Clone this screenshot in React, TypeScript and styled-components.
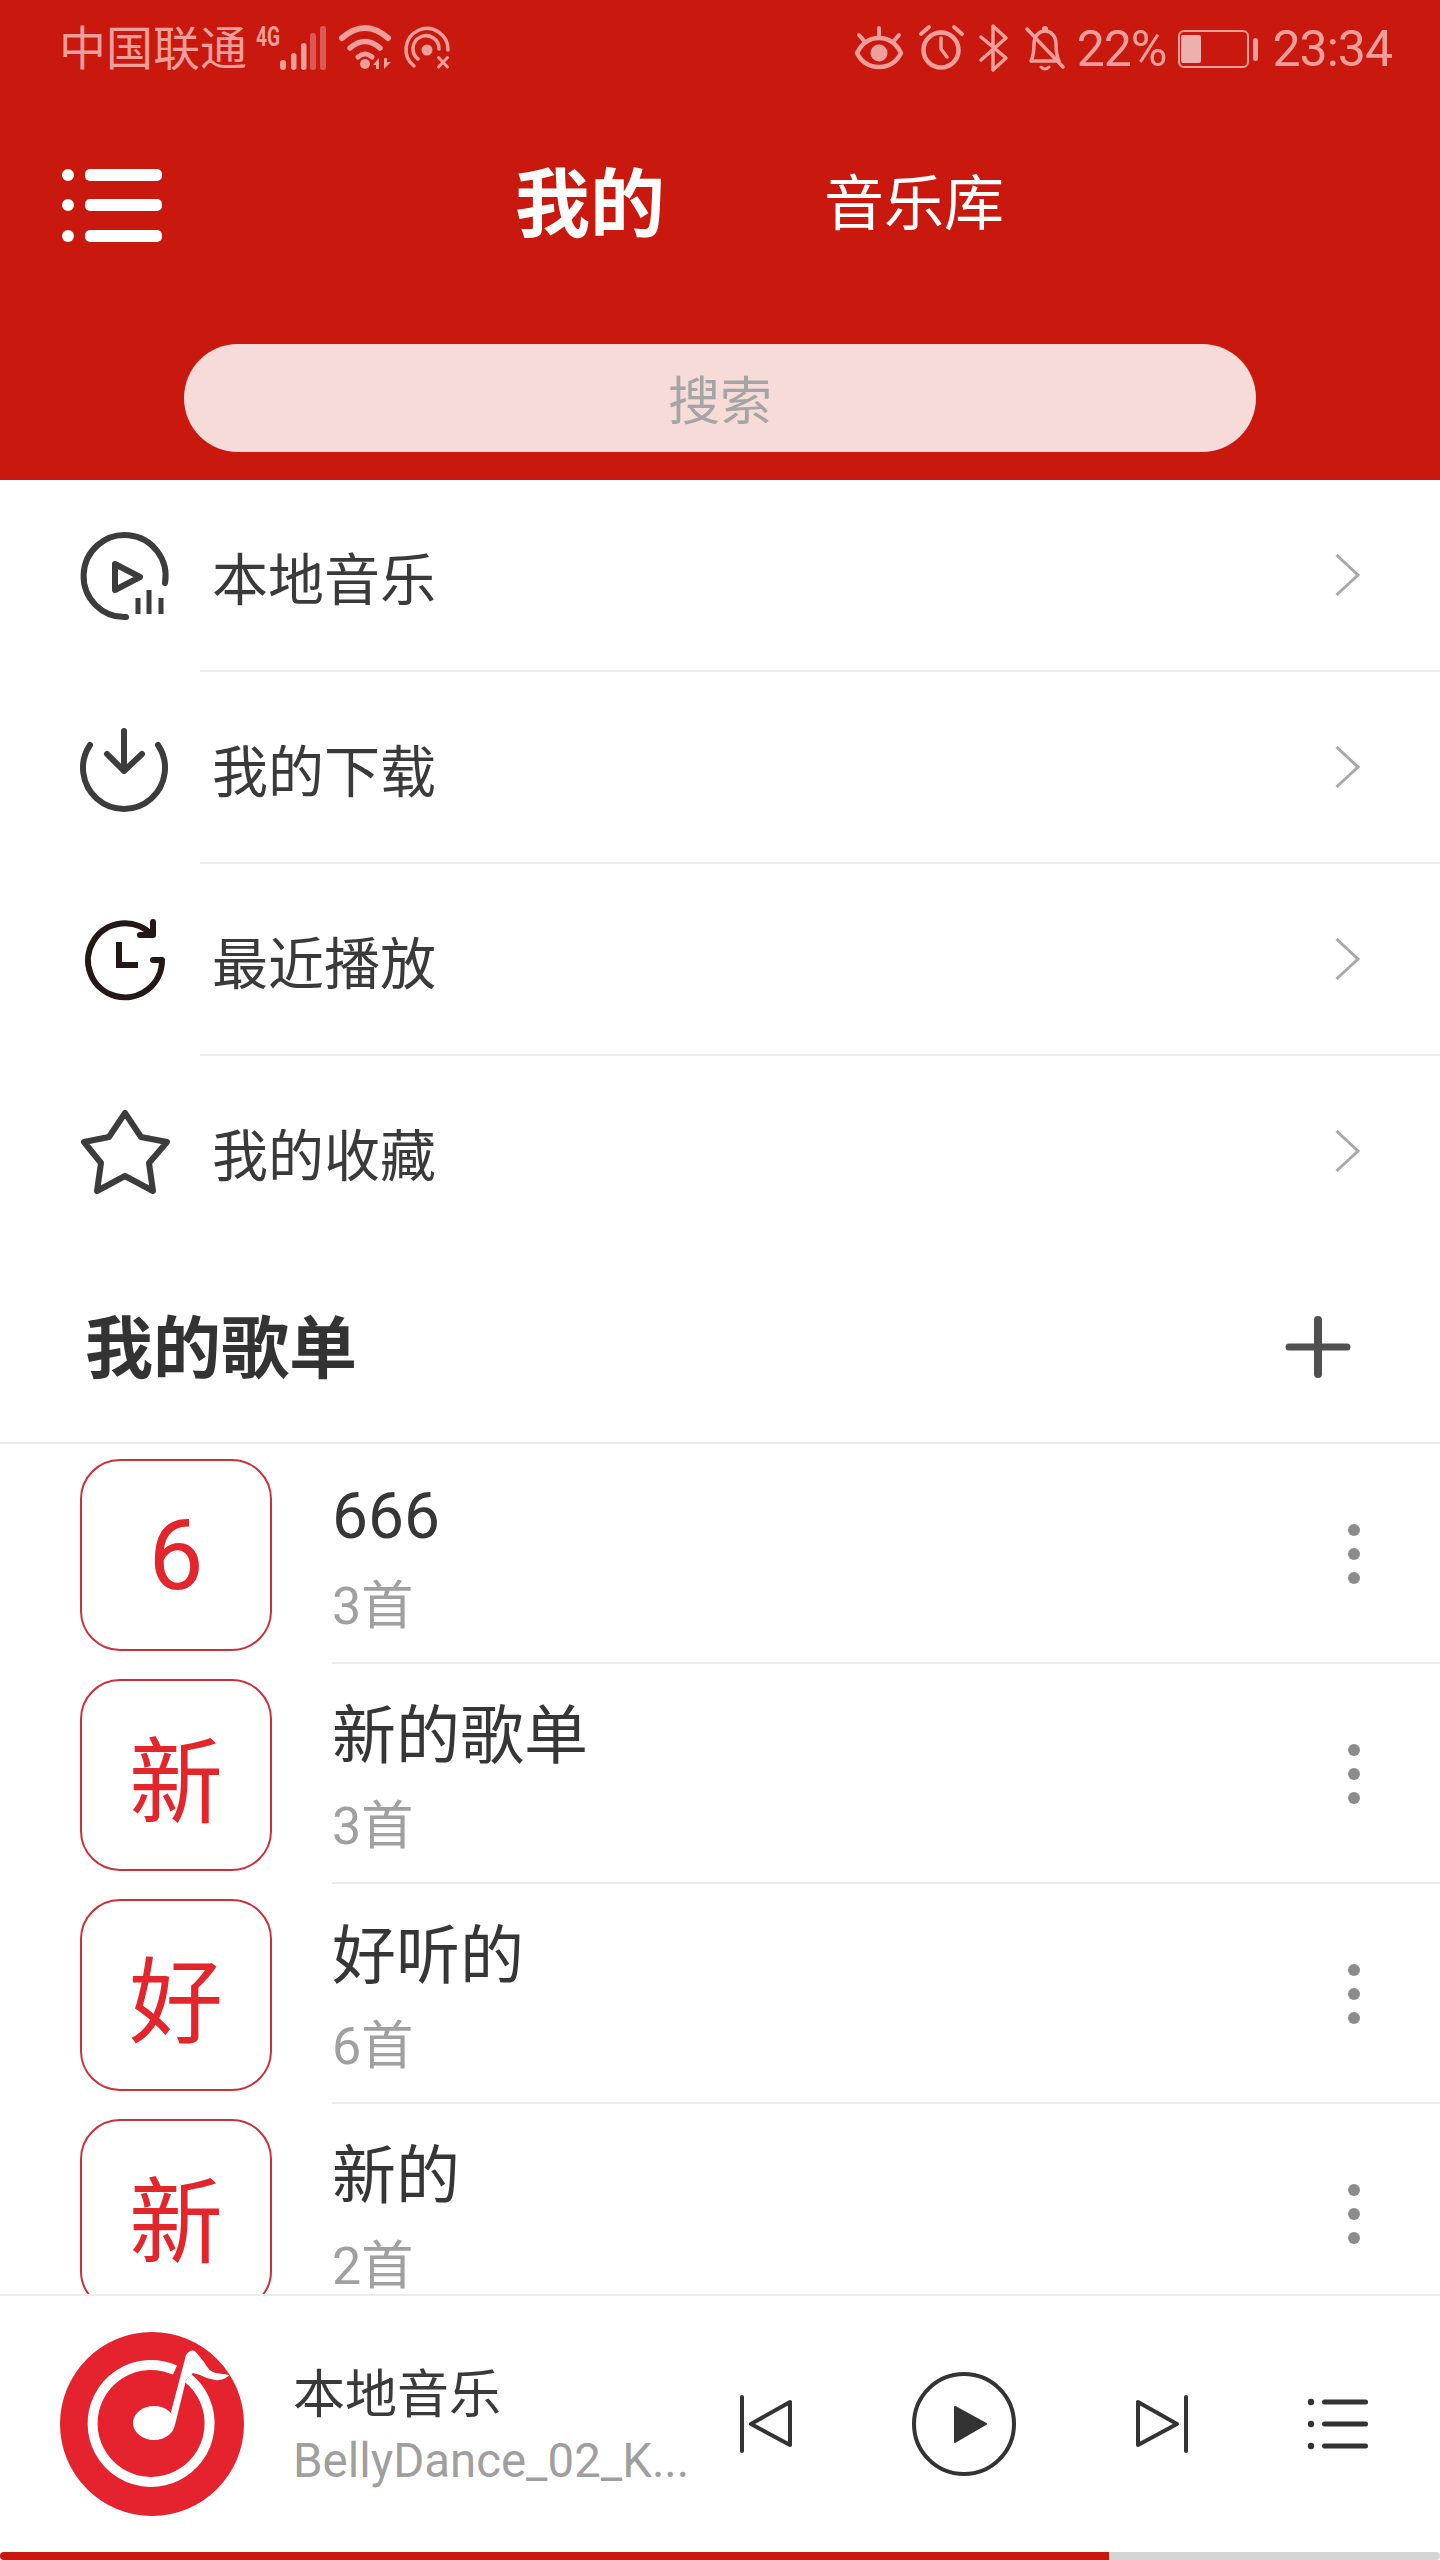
import React from "react";
import styled, { createGlobalStyle } from "styled-components";

const RED = "#c9190f";
const FONT = `Roboto, "Noto Sans CJK SC", sans-serif`;
const STATUS = "#ef9f9b";

const Global = createGlobalStyle`
  html, body { margin: 0; padding: 0; background: #fff; }
  * { box-sizing: border-box; }
`;

const Page = styled.div`
  width: 1440px;
  height: 2560px;
  display: flex;
  flex-direction: column;
  overflow: hidden;
  background: #fff;
  font-family: ${FONT};
`;

const Header = styled.header`
  height: 480px;
  flex: none;
  background: ${RED};
  display: flex;
  flex-direction: column;
`;

const StatusBar = styled.div`
  height: 98px;
  padding: 0 48px 0 59px;
  display: flex;
  align-items: center;
  justify-content: space-between;
  color: ${STATUS};
`;

const StatusGroup = styled.div`
  display: flex;
  align-items: center;
`;

const Carrier = styled.span`
  font-size: 47px;
  line-height: 60px;
  width: 197px;
`;

const Percent = styled.span`
  font-size: 50px;
  line-height: 60px;
  letter-spacing: -1px;
  margin: 0 12px 0 12px;
`;

const Clock = styled.span`
  font-size: 50px;
  line-height: 60px;
  letter-spacing: -1px;
  margin-left: 14px;
`;

const Nav = styled.nav`
  height: 204px;
  padding: 10px 0 0 62px;
  display: flex;
  align-items: center;
`;

const Tabs = styled.div`
  margin-left: 353px;
  display: flex;
  align-items: center;
  gap: 159px;
  color: #fff;
`;

const Tab = styled.span<{ $active?: boolean }>`
  font-size: ${(p) => (p.$active ? 75 : 60)}px;
  font-weight: ${(p) => (p.$active ? 700 : 400)};
  line-height: 90px;
`;

const Search = styled.div`
  margin: 42px 0 28px 184px;
  width: 1072px;
  height: 108px;
  border-radius: 54px;
  padding-top: 11px;
  background: #f7dbd9;
  color: #a5a5a5;
  font-size: 52px;
  line-height: 96px;
  display: flex;
  align-items: flex-start;
  justify-content: center;
`;

const Row = styled.div`
  height: 192px;
  display: flex;
`;

const RowIcon = styled.div`
  width: 200px;
  padding-left: 82px;
  display: flex;
  align-items: center;
  flex: none;
`;

const RowBody = styled.div<{ $last?: boolean }>`
  flex: 1;
  display: flex;
  align-items: center;
  justify-content: space-between;
  padding: 0 80px 0 12px;
  border-bottom: 2px solid ${(p) => (p.$last ? "transparent" : "#ececec")};
`;

const RowLabel = styled.span`
  font-size: 56px;
  color: #3a3a3a;
`;

const SectionHead = styled.div`
  height: 196px;
  flex: none;
  padding: 4px 91px 0 85px;
  display: flex;
  align-items: center;
  justify-content: space-between;
  border-bottom: 2px solid #ececec;
`;

const SectionTitle = styled.h2`
  margin: 0 0 8px;
  font-size: 68px;
  font-weight: 700;
  color: #333;
`;

const ListArea = styled.div`
  flex: 1;
  min-height: 0;
  overflow: hidden;
  padding-top: 14px;
`;

const Item = styled.div`
  height: 220px;
  padding-left: 80px;
  display: flex;
  align-items: flex-start;
`;

const Cover = styled.div<{ $digit?: boolean }>`
  width: 192px;
  height: 192px;
  margin-top: 1px;
  flex: none;
  border: 2px solid #c8323a;
  border-radius: 40px;
  color: #e3262b;
  font-size: ${(p) => (p.$digit ? 98 : 94)}px;
  display: flex;
  align-items: center;
  justify-content: center;
`;

const ItemBody = styled.div`
  flex: 1;
  height: 206px;
  margin-left: 60px;
  padding: 0 80px 6px 0;
  border-bottom: 2px solid #ececec;
  display: flex;
  align-items: center;
  justify-content: space-between;
`;

const ItemText = styled.div`
  display: flex;
  flex-direction: column;
`;

const ItemTitle = styled.span`
  font-size: 64px;
  line-height: 100px;
  color: #363636;
`;

const ItemCount = styled.span`
  font-size: 52px;
  line-height: 56px;
  margin: 12px 0;
  color: #a0a0a0;
`;

const Dots = styled.div`
  display: flex;
  flex-direction: column;
  gap: 12px;
  margin-bottom: 6px;
`;

const Dot = styled.span`
  width: 12px;
  height: 12px;
  border-radius: 50%;
  background: #8c8c8c;
`;

const Player = styled.footer`
  height: 258px;
  flex: none;
  border-top: 2px solid #ececec;
  padding: 0 70px 0 60px;
  display: flex;
  align-items: center;
  background: #fff;
`;

const PlayerInfo = styled.div`
  margin-left: 49px;
  padding-top: 10px;
  width: 400px;
  display: flex;
  flex-direction: column;
`;

const PlayerName = styled.span`
  font-size: 52px;
  line-height: 64px;
  color: #3a3a3a;
`;

const PlayerTrack = styled.span`
  font-size: 47.4px;
  line-height: 66px;
  color: #9f9f9f;
  white-space: nowrap;
`;

const Controls = styled.div`
  margin-left: auto;
  display: flex;
  align-items: center;
  gap: 118px;
`;

const Progress = styled.div`
  height: 8px;
  flex: none;
  background: #d5d5d5;
  border-radius: 4px;
  overflow: hidden;
`;

const ProgressFill = styled.div`
  width: 1109px;
  height: 100%;
  background: ${RED};
`;

const Icon = styled.svg`
  display: block;
  flex: none;
  overflow: visible;
`;

const LeftStatusIcons = () => (
  <Icon width={194} height={50} viewBox="256 24 194 50" fill="none">
    <text x="256" y="46" fontFamily="Roboto" fontWeight="700" fontSize="28" fill={STATUS} textLength="24" lengthAdjust="spacingAndGlyphs">4G</text>
    <g fill={STATUS}>
      <rect x="280" y="60" width="6" height="10" rx="3" />
      <rect x="291" y="53" width="5.5" height="17" rx="2.7" />
      <rect x="301" y="43" width="5.5" height="27" rx="2.7" />
    </g>
    <g fill="#dd5a54">
      <rect x="310" y="33" width="6" height="37" rx="3" />
      <rect x="320" y="26" width="6" height="44" rx="3" />
    </g>
    <g stroke={STATUS} strokeLinecap="round">
      <path d="M342 38 Q365 18 388 38" strokeWidth="6" />
      <path d="M350 48 Q365 35 380 48" strokeWidth="5.5" />
      <path d="M358 57 Q365 51 372 57" strokeWidth="5" />
    </g>
    <g fill={STATUS}>
      <circle cx="365" cy="64" r="5" />
      <path d="M379 58 V69 H376 V65 H373 Z" />
      <path d="M384 58 V69 L391 62 H387 V58 Z" />
    </g>
    <g stroke={STATUS} strokeWidth="3.5" strokeLinecap="round">
      <path d="M414 66 A21 21 0 1 1 448 50" />
      <path d="M418 59 A13 13 0 1 1 439 49" />
      <path d="M438.5 57.5 L447.5 67 M447.5 57.5 L438.5 67" strokeWidth="3" />
    </g>
    <circle cx="427" cy="50" r="5.5" fill={STATUS} />
  </Icon>
);

const RightStatusIcons = () => (
  <Icon width={210} height={50} viewBox="855 24 210 50" fill="none" stroke={STATUS} strokeLinecap="round" strokeLinejoin="round">
    <path d="M857 53 C862 43 870 38 879 38 C888 38 896 43 901 53 C896 63 888 67 879 67 C870 67 862 63 857 53Z" strokeWidth="4.5" />
    <circle cx="879" cy="53" r="8.5" fill={STATUS} stroke="none" />
    <path d="M879 28 V37 M859 35 L865 42 M899 35 L893 42" strokeWidth="4" />
    <circle cx="941" cy="50" r="17.5" strokeWidth="4.5" />
    <path d="M941 38 V49 L947 57" strokeWidth="3.5" />
    <path d="M921 34 L929 27 M954 27 L962 34" strokeWidth="4" />
    <path d="M981 37 L1006 58 L993 70 V26 L1006 38 L981 60" strokeWidth="3.5" />
    <path d="M1031 61 C1034 55 1034 50 1034 44 C1034 36 1039 31 1045 31 C1051 31 1056 36 1056 44 C1056 50 1056 55 1059 61 Z" strokeWidth="3.5" />
    <circle cx="1045" cy="29" r="3" fill={STATUS} stroke="none" />
    <path d="M1041 67 Q1045 71 1049 67" strokeWidth="3" />
    <path d="M1027 29 L1063 67" strokeWidth="3.5" />
  </Icon>
);

const Battery = () => (
  <Icon width={80} height={40} viewBox="1178 28 80 40" fill="none">
    <rect x="1179" y="30" width="69" height="36" rx="5" stroke={STATUS} strokeWidth="2" />
    <rect x="1181" y="34" width="20" height="28" rx="2" fill="#eeb0ac" />
    <rect x="1253" y="37" width="5" height="23" rx="2.5" fill={STATUS} />
  </Icon>
);

const Hamburger = () => (
  <Icon width={100} height={73} viewBox="62 170 100 73" fill="#fff">
    <ellipse cx="68" cy="176" rx="6" ry="6" />
    <ellipse cx="68" cy="206" rx="6" ry="6" />
    <ellipse cx="68" cy="237" rx="6" ry="6" />
    <rect x="85" y="170" width="77" height="12" rx="5" />
    <rect x="85" y="200" width="77" height="12" rx="5" />
    <rect x="85" y="231" width="77" height="12" rx="5" />
  </Icon>
);

const ICON_STROKE = { fill: "none", stroke: "#3c3c3c", strokeWidth: 6, strokeLinecap: "round", strokeLinejoin: "round" } as const;

const LocalIcon = () => (
  <Icon width={88} height={88} viewBox="82 532 88 88" {...ICON_STROKE}>
    <path d="M126 617 A41 41 0 1 1 165 583" />
    <path d="M115 564 L140 577 L115 590 Z" />
    <path d="M138 598 V614 M149 590 V614 M161 598 V614" strokeWidth="5" strokeLinecap="butt" />
  </Icon>
);

const DownloadIcon = () => (
  <Icon width={88} height={88} viewBox="82 724 88 88" {...ICON_STROKE}>
    <path d="M90 745 A41 41 0 1 0 158 745" />
    <path d="M124 731 V771 M107 754 L124 771 L142 754" />
  </Icon>
);

const RecentIcon = () => (
  <Icon width={88} height={88} viewBox="80 916 88 88" fill="none" stroke="#231815" strokeWidth="6" strokeLinecap="round" strokeLinejoin="round">
    <path d="M150 935 A37 37 0 1 0 160 960 H151" />
    <path d="M138 935 H151 V922" />
    <path d="M117 942 V965 H136" strokeLinecap="butt" strokeLinejoin="miter" />
  </Icon>
);

const StarIcon = () => (
  <Icon width={88} height={88} viewBox="81 1108 88 88" {...ICON_STROKE}>
    <path d="M124 1113 L140 1137 L166 1142 L148 1163 L152 1191 L124 1176 L96 1191 L100 1163 L83 1142 L108 1137 Z" />
  </Icon>
);

const Chevron = () => (
  <Icon width={24} height={42} viewBox="1336 555 24 42" fill="none" stroke="#a8a8a8" strokeWidth="3">
    <path d="M1336.5 556 L1358 576 L1336.5 596" />
  </Icon>
);

const Plus = () => (
  <Icon width={62} height={60} viewBox="0 0 62 60" fill="none" stroke="#505050" strokeLinecap="round">
    <path d="M2 30 H60" strokeWidth="7" />
    <path d="M31 3 V57" strokeWidth="8" />
  </Icon>
);

const Logo = () => (
  <Icon width={184} height={184} viewBox="60 2332 184 184">
    <circle cx="152" cy="2424" r="92" fill="#e5232e" />
    <path d="M188 2378 A58.5 58.5 0 1 1 175 2370" fill="none" stroke="#fff" strokeWidth="10" />
    <ellipse cx="154" cy="2423" rx="21" ry="17" fill="#fff" />
    <path d="M171 2412 L186 2355 Q190 2349 195 2351 L204 2362 Q209 2372 216 2373 L229.5 2375 Q224 2381 215 2380 Q207 2379 200 2375 L193 2373 L186 2380 L175 2425 Z" fill="#fff" />
  </Icon>
);

const CTRL = { fill: "none", stroke: "#333", strokeWidth: 4, strokeLinecap: "round", strokeLinejoin: "round" } as const;

const Prev = () => (
  <Icon width={52} height={60} viewBox="740 2394 52 60" {...CTRL}>
    <path d="M742 2397 V2451" />
    <path d="M790 2402 V2445 L751 2424 Z" />
  </Icon>
);

const Play = () => (
  <Icon width={107} height={108} viewBox="910 2370 107 108" {...CTRL}>
    <circle cx="964" cy="2424" r="50" />
    <path d="M955 2407 L986 2424 L955 2442 Z" fill="#333" strokeWidth="2" />
  </Icon>
);

const Next = () => (
  <Icon width={53} height={60} viewBox="1135 2394 53 60" {...CTRL}>
    <path d="M1186 2397 V2451" />
    <path d="M1138 2402 V2445 L1177 2424 Z" />
  </Icon>
);

const Queue = () => (
  <Icon width={64} height={52} viewBox="1306 2398 64 52" fill="#333">
    <circle cx="1311" cy="2402" r="3.2" />
    <circle cx="1311" cy="2424" r="3.2" />
    <circle cx="1311" cy="2446" r="3.2" />
    <rect x="1322" y="2399.5" width="46" height="5" rx="2.5" />
    <rect x="1322" y="2421.5" width="46" height="5" rx="2.5" />
    <rect x="1322" y="2443.5" width="46" height="5" rx="2.5" />
  </Icon>
);

const menu = [
  { label: "本地音乐", icon: <LocalIcon /> },
  { label: "我的下载", icon: <DownloadIcon /> },
  { label: "最近播放", icon: <RecentIcon /> },
  { label: "我的收藏", icon: <StarIcon /> },
];

const lists = [
  { cover: "6", digit: true, title: "666", count: "3首" },
  { cover: "新", title: "新的歌单", count: "3首" },
  { cover: "好", title: "好听的", count: "6首" },
  { cover: "新", title: "新的", count: "2首" },
];

export default function App() {
  return (
    <Page>
      <Global />
      <Header>
        <StatusBar>
          <StatusGroup>
            <Carrier>中国联通</Carrier>
            <LeftStatusIcons />
          </StatusGroup>
          <StatusGroup>
            <RightStatusIcons />
            <Percent>22%</Percent>
            <Battery />
            <Clock>23:34</Clock>
          </StatusGroup>
        </StatusBar>
        <Nav>
          <Hamburger />
          <Tabs>
            <Tab $active>我的</Tab>
            <Tab>音乐库</Tab>
          </Tabs>
        </Nav>
        <Search>搜索</Search>
      </Header>
      {menu.map((m, i) => (
        <Row key={m.label}>
          <RowIcon>{m.icon}</RowIcon>
          <RowBody $last={i === menu.length - 1}>
            <RowLabel>{m.label}</RowLabel>
            <Chevron />
          </RowBody>
        </Row>
      ))}
      <SectionHead>
        <SectionTitle>我的歌单</SectionTitle>
        <Plus />
      </SectionHead>
      <ListArea>
        {lists.map((l, i) => (
          <Item key={i}>
            <Cover $digit={l.digit}>{l.cover}</Cover>
            <ItemBody>
              <ItemText>
                <ItemTitle>{l.title}</ItemTitle>
                <ItemCount>{l.count}</ItemCount>
              </ItemText>
              <Dots>
                <Dot />
                <Dot />
                <Dot />
              </Dots>
            </ItemBody>
          </Item>
        ))}
      </ListArea>
      <Player>
        <Logo />
        <PlayerInfo>
          <PlayerName>本地音乐</PlayerName>
          <PlayerTrack>BellyDance_02_K...</PlayerTrack>
        </PlayerInfo>
        <Controls>
          <Prev />
          <Play />
          <Next />
          <Queue />
        </Controls>
      </Player>
      <Progress>
        <ProgressFill />
      </Progress>
    </Page>
  );
}
